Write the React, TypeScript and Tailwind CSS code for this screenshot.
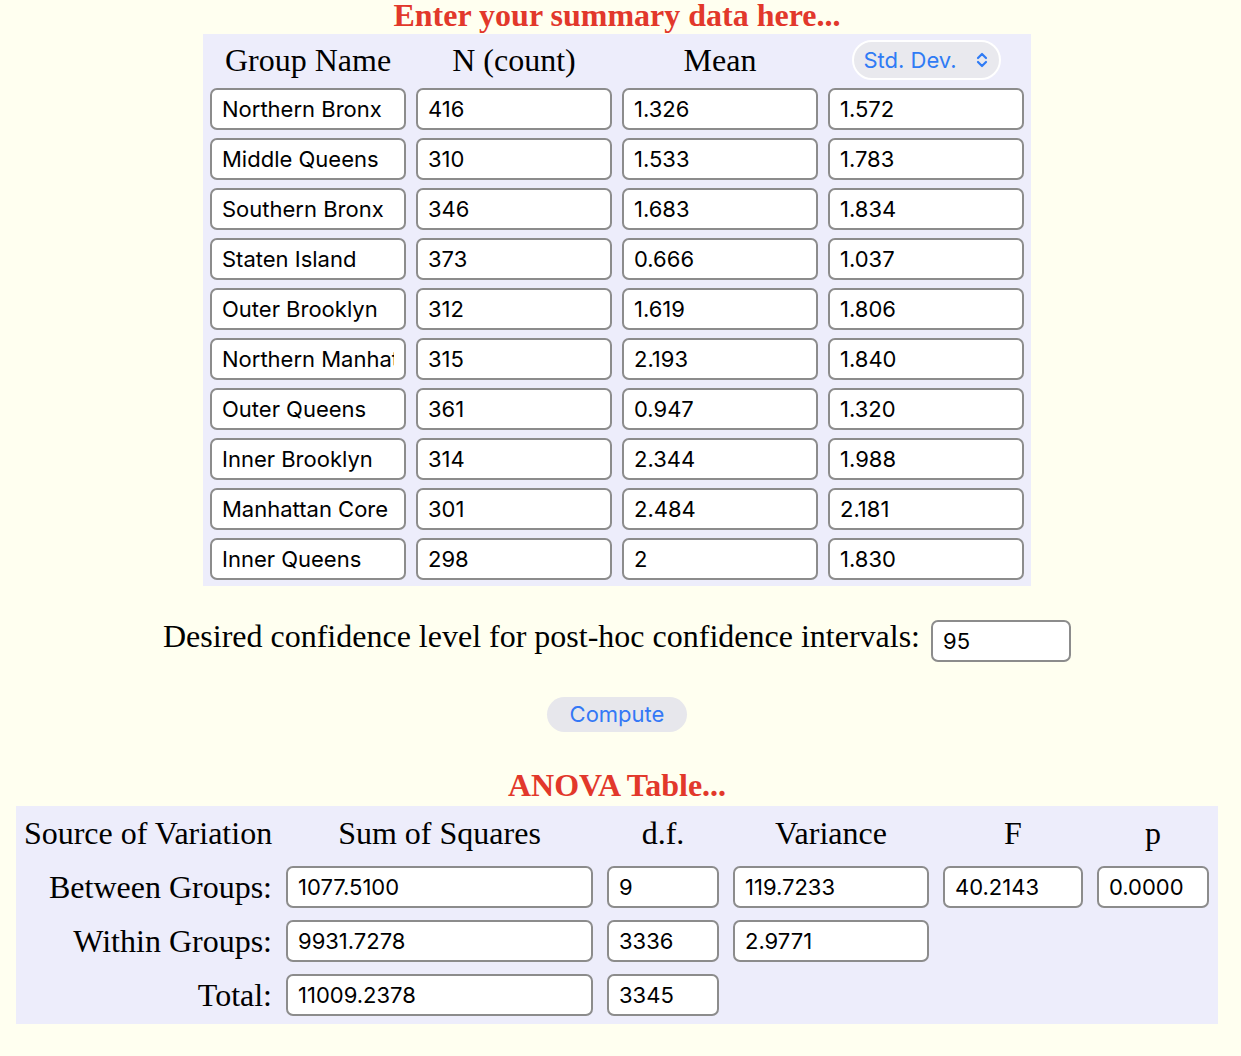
import React from "react";

const groups = [
  ["Northern Bronx", "416", "1.326", "1.572"],
  ["Middle Queens", "310", "1.533", "1.783"],
  ["Southern Bronx", "346", "1.683", "1.834"],
  ["Staten Island", "373", "0.666", "1.037"],
  ["Outer Brooklyn", "312", "1.619", "1.806"],
  ["Northern Manhattan", "315", "2.193", "1.840"],
  ["Outer Queens", "361", "0.947", "1.320"],
  ["Inner Brooklyn", "314", "2.344", "1.988"],
  ["Manhattan Core", "301", "2.484", "2.181"],
  ["Inner Queens", "298", "2", "1.830"],
];

const serif = "font-['Liberation_Serif','Times_New_Roman',serif]";

function Field({ value, className = "" }: { value: string; className?: string }) {
  return (
    <input
      defaultValue={value}
      className={`h-[42px] rounded-[7px] border-2 border-[#8c8c8c] bg-white px-[10px] font-['Inter','Liberation_Sans',sans-serif] text-[22px] text-black outline-none ${className}`}
    />
  );
}

function UpDown() {
  return (
    <svg width="14" height="18" viewBox="0 0 14 18" fill="none" stroke="#2f7bf5" strokeWidth="2.2" strokeLinecap="round" strokeLinejoin="round">
      <path d="M3 7l4-4 4 4" />
      <path d="M3 11l4 4 4-4" />
    </svg>
  );
}

export default function App() {
  return (
    <div className={`min-h-screen bg-[#fffff0] text-black ${serif}`}>
      <div className="flex w-[1234px] flex-col items-center">
        {/* summary input */}
        <h1 className="h-[34px] text-[32px] font-bold leading-[30px] text-[#e2382b]">
          Enter your summary data here...
        </h1>
        <div className="bg-[#ededfb] px-[7px] pb-[6px] pt-[6px]">
          <div className="grid grid-cols-[196px_196px_196px_196px] gap-x-[10px] gap-y-[8px]">
            <div className="flex h-[40px] items-center justify-center text-[32px]">Group Name</div>
            <div className="flex h-[40px] items-center justify-center text-[32px]">N (count)</div>
            <div className="flex h-[40px] items-center justify-center text-[32px]">Mean</div>
            <div className="flex h-[40px] items-center justify-center">
              <button className="flex h-[40px] w-[149px] items-center justify-between rounded-full border-2 border-white bg-[#e9e9ee] pl-[10px] pr-[10px] font-['Inter','Liberation_Sans',sans-serif] text-[22px] text-[#2f7bf5]">
                <span>Std. Dev.</span>
                <UpDown />
              </button>
            </div>
            {groups.map((g) =>
              g.map((v, i) => <Field key={g[0] + i} value={v} className="w-[196px]" />)
            )}
          </div>
        </div>

        {/* confidence level */}
        <div className="mt-[34px] flex items-start gap-[11px]">
          <span className="text-[32px] leading-[32px]">Desired confidence level for post-hoc confidence intervals:</span>
          <Field value="95" className="w-[140px]" />
        </div>

        <button className="mt-[35px] h-[35px] w-[140px] rounded-full bg-[#e7e7ec] font-['Inter','Liberation_Sans',sans-serif] text-[22px] text-[#3478f6]">
          Compute
        </button>

        {/* anova */}
        <h2 className="mt-[38px] h-[36px] text-[32px] font-bold leading-[30px] text-[#e2382b]">ANOVA Table...</h2>
        <div className="w-[1202px] bg-[#ededfb] pb-[8px] pl-[8px] pr-[9px] pt-[6px]">
          <div className="grid grid-cols-[248px_307px_112px_196px_140px_112px] gap-x-[14px] gap-y-[12px] text-[32px]">
            <div className="flex h-[42px] items-center justify-center whitespace-nowrap">Source of Variation</div>
            <div className="flex h-[42px] items-center justify-center">Sum of Squares</div>
            <div className="flex h-[42px] items-center justify-center">d.f.</div>
            <div className="flex h-[42px] items-center justify-center">Variance</div>
            <div className="flex h-[42px] items-center justify-center">F</div>
            <div className="flex h-[42px] items-center justify-center">p</div>

            <div className="flex h-[42px] items-center justify-end whitespace-nowrap">Between Groups:</div>
            <Field value="1077.5100" />
            <Field value="9" />
            <Field value="119.7233" />
            <Field value="40.2143" />
            <Field value="0.0000" />

            <div className="flex h-[42px] items-center justify-end whitespace-nowrap">Within Groups:</div>
            <Field value="9931.7278" />
            <Field value="3336" />
            <Field value="2.9771" />
            <div />
            <div />

            <div className="flex h-[42px] items-center justify-end">Total:</div>
            <Field value="11009.2378" />
            <Field value="3345" />
            <div />
            <div />
            <div />
          </div>
        </div>
      </div>
    </div>
  );
}
